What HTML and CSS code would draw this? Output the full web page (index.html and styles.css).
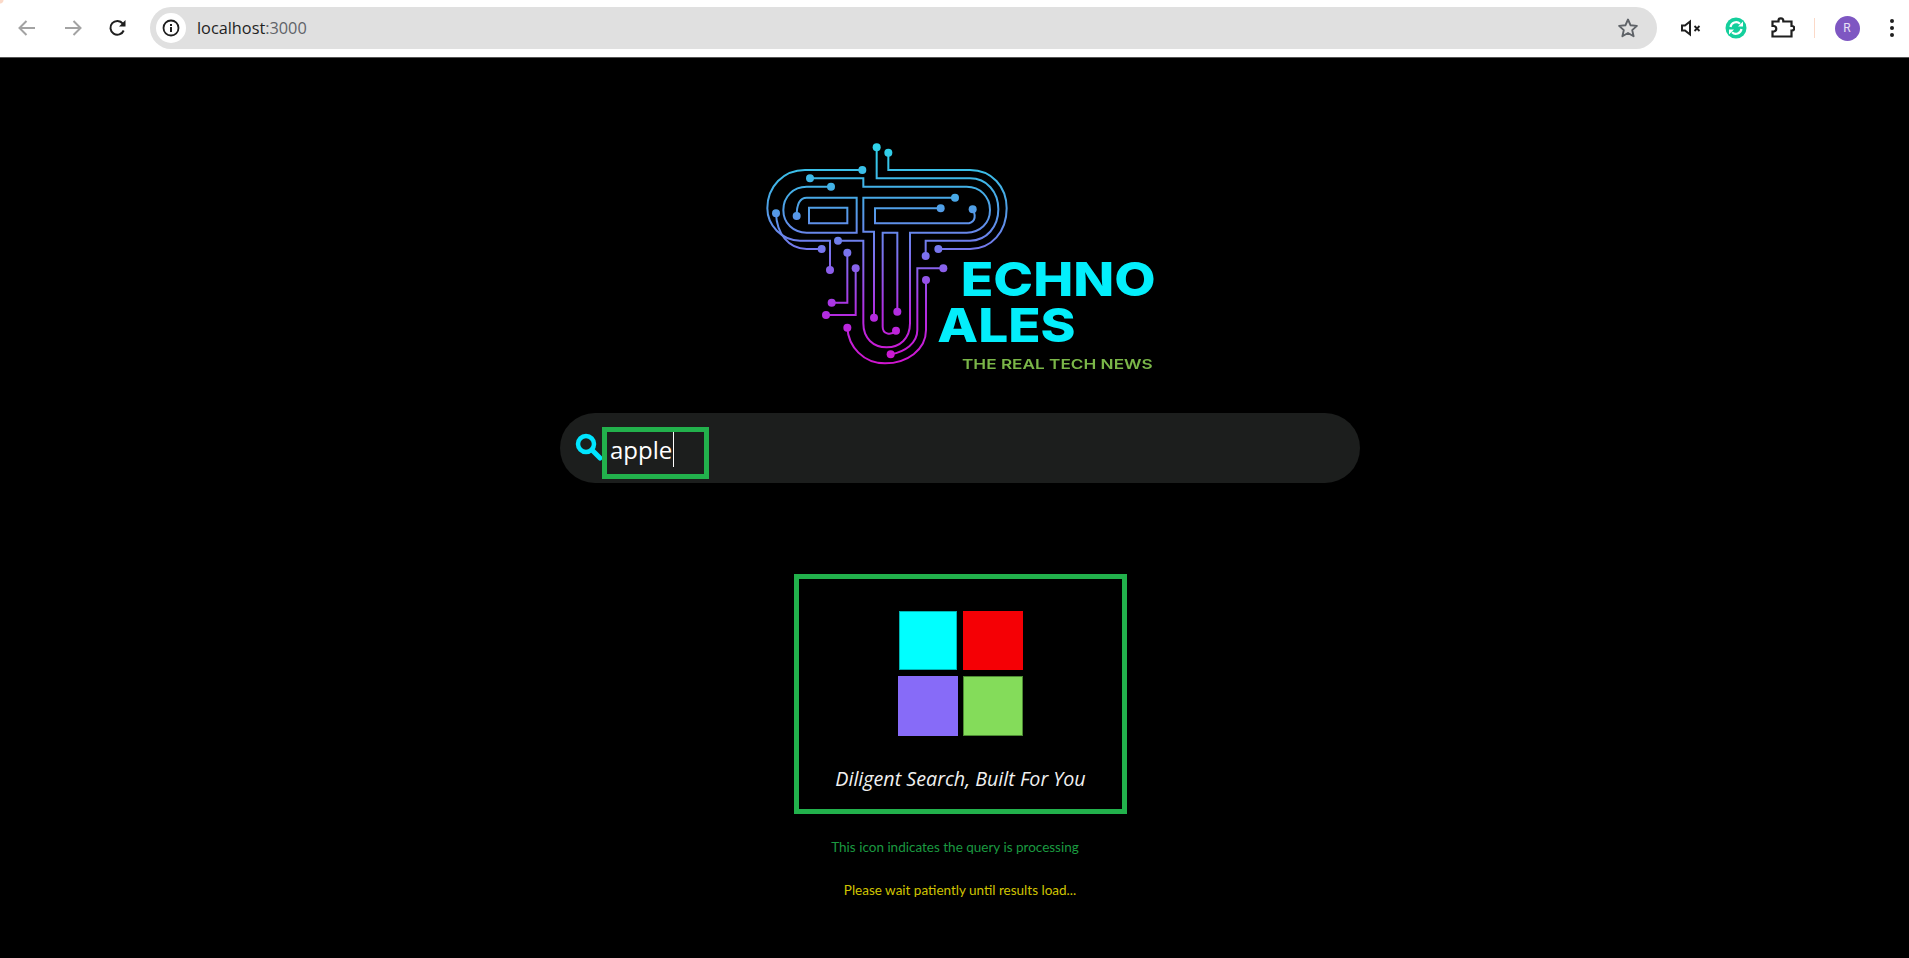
FILE: index.html

```html
<!DOCTYPE html>
<html lang="en">
<head>
  <meta charset="UTF-8">
  <title>Techno Tales</title>
  <meta name="viewport" content="width=device-width, initial-scale=1.0">
  <link rel="stylesheet" href="styles.css">
</head>
<body>
  <header class="toolbar">
    <div class="tool-btn">
      <svg width="24" height="24" viewBox="0 0 24 24" class="line grey"><path d="M20 12H5M11.5 5L4.5 12l7 7"/></svg>
    </div>
    <div class="tool-btn">
      <svg width="24" height="24" viewBox="0 0 24 24" class="line grey"><path d="M4 12h15M12.500 5l7 7-7 7"/></svg>
    </div>
    <div class="tool-btn">
      <svg width="24" height="24" viewBox="1.500 0 24 24" class="line dark"><path d="M18.200 14.500A6.900 6.900 0 1 1 17.300 7.600L19 9.500"/><path class="solid" d="M20 4v6.500h-6.500z"/></svg>
    </div>

    <div class="address">
      <div class="site-info">
        <svg width="20" height="20" viewBox="0 0 20 20"><circle cx="10" cy="10" r="7.500" fill="none" stroke="#1f1f1f" stroke-width="1.800"/><rect x="9" y="9" width="2" height="5" fill="#1f1f1f"/><rect x="9" y="6" width="2" height="2" fill="#1f1f1f"/></svg>
      </div>
      <span class="url">localhost<span class="port">:3000</span></span>
      <svg class="star" width="24" height="24" viewBox="0 0 24 24"><path d="M12 3.500l2.600 5.800 6.300.6-4.700 4.200 1.400 6.200-5.600-3.300-5.600 3.300 1.400-6.200-4.700-4.200 6.300-.6z" fill="none" stroke="#5f6368" stroke-width="1.900" stroke-linejoin="round"/></svg>
    </div>

    <div class="tool-btn">
      <svg width="24" height="24" viewBox="0 0 24 24" class="line dark"><path d="M3 9.500v5h3l5 4V5.500l-5 4z"/><path class="thin" d="M15.500 10l5 5M20.500 10l-5 5"/></svg>
    </div>
    <div class="tool-btn">
      <svg width="24" height="24" viewBox="1 0 24 24">
        <circle cx="12" cy="12" r="10.500" fill="#14cf9c"/>
        <path d="M6.500 11a5.700 5.700 0 0 1 9.500-3.200" fill="none" stroke="#fff" stroke-width="2.200"/>
        <path d="M17.500 13a5.700 5.700 0 0 1-9.500 3.200" fill="none" stroke="#fff" stroke-width="2.200"/>
        <path d="M14 10.500h5v-5zM10 13.500H5v5z" fill="#fff"/>
      </svg>
    </div>
    <div class="tool-btn">
      <svg width="24" height="24" viewBox="0 0 24 24" class="line dark puzzle"><path d="M1.500 5.500h6v-.7a2.400 2.400 0 0 1 4.800 0v.7h8.200v4.500h.5a2 2 0 0 1 0 4.500h-.5v6h-19v-5h1.500a2.800 2.800 0 0 0 0-5.500H1.500z"/></svg>
    </div>
    <div class="separator"></div>
    <div class="tool-btn">
      <div class="avatar">R</div>
    </div>
    <div class="menu-btn">
      <span></span><span></span><span></span>
    </div>
  </header>

  <main class="page">
    <svg class="logo" width="420" height="250" viewBox="0 0 1260 750">
      <defs>
        <linearGradient id="wire" gradientUnits="userSpaceOnUse" x1="0" y1="50" x2="0" y2="700">
          <stop offset="0" stop-color="#2fd3ea"/>
          <stop offset="0.25" stop-color="#4aa6e6"/>
          <stop offset="0.5" stop-color="#7c72ee"/>
          <stop offset="0.75" stop-color="#b02fe2"/>
          <stop offset="1" stop-color="#d015cf"/>
        </linearGradient>
      </defs>
      <g class="wires">
        <path d="M415 68V120H660C725 120 770 170 770 235C770 305 725 357 660 357H565"/>
        <path d="M380 52V145H660C710 145 745 185 745 238C745 290 710 332 660 332H527V378"/>
        <path d="M180 145H340V170H650C690 170 720 200 720 240C720 280 690 308 650 308H480V580C480 625 450 652 410 652C370 652 340 625 340 580V332H264"/>
        <path d="M337 120H165C100 120 52 170 52 235C52 285 95 332 150 332H240V420"/>
        <path d="M78 250C80 310 115 357 170 357H215"/>
        <path d="M243 170H170C130 170 100 200 100 240C100 280 130 308 170 308H320V203H170C150 203 140 218 140 258"/>
        <path d="M615 203H340V305H372V563"/>
        <path d="M572 235H375V280H650C670 280 682 265 668 238"/>
        <path d="M177 233H292V280H177Z"/>
        <path d="M442 545V308H398V590C398 610 420 620 438 602"/>
        <path d="M292 368V518H245"/>
        <path d="M317 415V555H228"/>
        <path d="M580 415H502V600C502 640 465 665 422 673"/>
        <path d="M528 450V600C528 660 470 700 405 700C340 700 295 650 292 593"/>
      </g>
      <g class="dots">
        <circle cx="415" cy="68" r="12"/><circle cx="380" cy="52" r="12"/>
        <circle cx="337" cy="120" r="12"/><circle cx="180" cy="145" r="12"/>
        <circle cx="243" cy="170" r="12"/><circle cx="615" cy="203" r="12"/>
        <circle cx="572" cy="235" r="12"/><circle cx="668" cy="238" r="12"/>
        <circle cx="78" cy="250" r="12"/><circle cx="140" cy="258" r="12"/>
        <circle cx="264" cy="332" r="12"/><circle cx="215" cy="357" r="12"/>
        <circle cx="565" cy="357" r="12"/><circle cx="292" cy="368" r="12"/>
        <circle cx="527" cy="378" r="12"/><circle cx="317" cy="415" r="12"/>
        <circle cx="580" cy="415" r="12"/><circle cx="240" cy="420" r="12"/>
        <circle cx="528" cy="450" r="12"/><circle cx="245" cy="518" r="12"/>
        <circle cx="442" cy="545" r="12"/><circle cx="228" cy="555" r="12"/>
        <circle cx="372" cy="563" r="12"/><circle cx="292" cy="593" r="12"/>
        <circle cx="438" cy="602" r="12"/><circle cx="422" cy="673" r="12"/>
      </g>
      <text class="brand" x="632" y="497" textLength="585" lengthAdjust="spacingAndGlyphs">ECHNO</text>
      <text class="brand" x="562" y="637" textLength="415" lengthAdjust="spacingAndGlyphs">ALES</text>
      <text class="tagline" x="636" y="716" textLength="572" lengthAdjust="spacingAndGlyphs">THE REAL TECH NEWS</text>
    </svg>

    <div class="search-bar">
      <svg class="search-icon" width="30" height="30" viewBox="0 0 30 30"><circle cx="12" cy="12" r="8" fill="none" stroke="#00e5ff" stroke-width="4.500"/><path d="M18 18l8 8" stroke="#00e5ff" stroke-width="5" stroke-linecap="round"/></svg>
      <div class="search-box"><span class="query">apple</span></div>
    </div>

    <div class="loader-card">
      <div class="squares">
        <div class="square cyan"></div>
        <div class="square red"></div>
        <div class="square purple"></div>
        <div class="square green"></div>
      </div>
      <p class="slogan">Diligent Search, Built For You</p>
    </div>

    <p class="note note-green">This icon indicates the query is processing</p>
    <p class="note note-yellow">Please wait patiently until results load...</p>
  </main>
</body>
</html>
```

FILE: styles.css

```css
html, body {
  height: 100%;
}
body {
  margin: 0;
  background: #000;
  overflow: hidden;
  font-family: "Open Sans", sans-serif;
}

/* browser bar */
.toolbar {
  display: flex;
  align-items: center;
  box-sizing: border-box;
  height: 58px;
  padding: 0 0 1px 4px;
  background: radial-gradient(circle at 0 0, #fbd9c8 3px, #fff 4px);
  border-bottom: 1px solid #555;
}
.tool-btn {
  display: flex;
  justify-content: center;
  align-items: center;
  width: 46px;
  height: 46px;
  flex: none;
}
.line {
  fill: none;
  stroke-width: 2;
}
.line.grey {
  stroke: #a3a3a3;
}
.line.dark {
  stroke: #1f1f1f;
}
.line.puzzle {
  stroke-width: 2.200;
}
.line .solid {
  fill: #1f1f1f;
  stroke: none;
}
.line .thin {
  stroke-width: 1.800;
}
.address {
  display: flex;
  align-items: center;
  flex: none;
  box-sizing: border-box;
  width: 1507px;
  height: 42px;
  margin: 0 11px 0 8px;
  padding: 0 17px 0 6px;
  background: #e0e0e0;
  border-radius: 21px;
}
.site-info {
  display: flex;
  justify-content: center;
  align-items: center;
  width: 30px;
  height: 30px;
  background: #fff;
  border-radius: 50%;
}
.url {
  margin-left: 11px;
  font-size: 16.300px;
  color: #1f1f1f;
}
.port {
  color: #5f6368;
}
.star {
  margin-left: auto;
}
.separator {
  flex: none;
  width: 1px;
  height: 20px;
  margin: 0 9px 0 8px;
  background: #fbd9c8;
}
.avatar {
  width: 25px;
  height: 25px;
  line-height: 25px;
  text-align: center;
  border-radius: 50%;
  background: #7e57c2;
  color: #e8e0f5;
  font-size: 12px;
  font-family: "Roboto", sans-serif;
}
.menu-btn {
  display: flex;
  flex-direction: column;
  align-items: center;
  gap: 3px;
  width: 30px;
  margin-left: 7px;
}
.menu-btn span {
  width: 4px;
  height: 4px;
  border-radius: 50%;
  background: #1f1f1f;
}

/* page */
.page {
  display: flex;
  flex-direction: column;
  align-items: center;
  padding: 72px 0 0 11px;
}
.logo {
  display: block;
  filter: blur(0.4px);
}
.wires path {
  fill: none;
  stroke: url(#wire);
  stroke-width: 6;
}
.dots circle {
  fill: url(#wire);
}
.brand {
  font-family: "Inter", sans-serif;
  font-weight: 800;
  font-size: 140px;
  fill: #03eefb;
}
.tagline {
  font-family: "Inter", sans-serif;
  font-weight: 600;
  font-size: 41px;
  fill: #7ab648;
}

.search-bar {
  display: flex;
  align-items: center;
  box-sizing: border-box;
  width: 800px;
  height: 70px;
  margin-top: 33px;
  padding: 0 0 0 14px;
  background: #1c1e1d;
  border-radius: 35px;
}
.search-icon {
  flex: none;
  margin-top: -2px;
}
.search-box {
  box-sizing: border-box;
  width: 107px;
  height: 52px;
  margin: 10px 0 0 -2px;
  padding: 0 0 0 3px;
  border: 5px solid #22b14c;
}
.query {
  display: inline-block;
  height: 35px;
  line-height: 35px;
  padding-right: 1px;
  border-right: 1px solid #fff;
  font-size: 24px;
  color: #fff;
}

.loader-card {
  display: flex;
  flex-direction: column;
  align-items: center;
  box-sizing: border-box;
  width: 333px;
  height: 240px;
  margin: 91px 0 0 1px;
  padding-top: 32px;
  border: 5px solid #22b14c;
}
.squares {
  display: grid;
  grid-template-columns: 60px 60px;
  grid-template-rows: 60px 60px;
  gap: 5px;
}
.square {
  box-sizing: border-box;
}
.cyan {
  background: #00ffff;
  border: 1px solid #00b3b3;
  margin: 0 1px 1px;
}
.red {
  background: #f50005;
  margin-bottom: 1px;
}
.purple {
  background: #876bf8;
}
.green {
  background: #84dc5a;
  border: 1px solid #4d8a33;
}
.slogan {
  margin: 29px 0 0;
  font-size: 19.700px;
  font-style: italic;
  color: #f0f0f0;
}

.note {
  margin: 0;
  font-family: "Lato", sans-serif;
  font-size: 13.500px;
  line-height: 16px;
}
.note-green {
  margin-top: 25px;
  margin-left: -10px;
  color: #1b9a40;
}
.note-yellow {
  margin-top: 27px;
  color: #d0c400;
}
```
